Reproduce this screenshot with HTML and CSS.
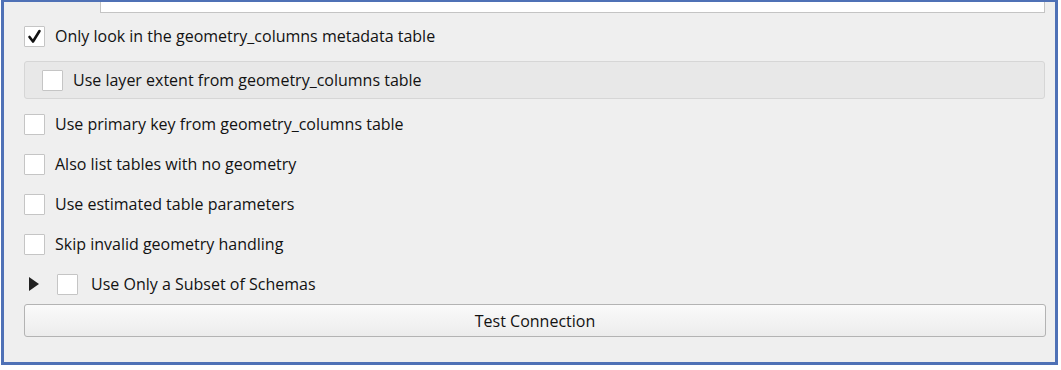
FILE: index.html
```html
<!DOCTYPE html>
<html>
<head>
<meta charset="utf-8">
<link rel="stylesheet" href="styles.css">
</head>
<body>
<div class="frame">
  <div class="stub-row"><div class="stub"></div></div>
  <div class="row row1">
    <span class="box checked"><svg width="15" height="15" viewBox="0 0 15 15"><path d="M2.5 8 L6 12.5 L12.5 2" fill="none" stroke="#111" stroke-width="2.6" stroke-linecap="round" stroke-linejoin="round"/></svg></span>
    <span class="label">Only look in the geometry_columns metadata table</span>
  </div>
  <div class="group">
    <span class="box"></span>
    <span class="label">Use layer extent from geometry_columns table</span>
  </div>
  <div class="row row3">
    <span class="box"></span>
    <span class="label">Use primary key from geometry_columns table</span>
  </div>
  <div class="row">
    <span class="box"></span>
    <span class="label">Also list tables with no geometry</span>
  </div>
  <div class="row">
    <span class="box"></span>
    <span class="label">Use estimated table parameters</span>
  </div>
  <div class="row">
    <span class="box"></span>
    <span class="label">Skip invalid geometry handling</span>
  </div>
  <div class="row row7">
    <span class="arrow"></span>
    <span class="box"></span>
    <span class="label">Use Only a Subset of Schemas</span>
  </div>
  <div class="button">Test Connection</div>
</div>
</body>
</html>
```
FILE: styles.css
```css
html, body {
  margin: 0;
  padding: 0;
  background: #ffffff;
}
.frame {
  margin-left: 1px;
  height: 360px;
  border: 3px solid #4f71b6;
  border-top-width: 2px;
  background: #efefef;
  display: flex;
  flex-direction: column;
  padding-left: 20px;
  padding-right: 10px;
  box-sizing: content-box;
  width: 1021px;
  font-family: "Open Sans", "DejaVu Sans", sans-serif;
  font-size: 16px;
  color: #121212;
}
.stub-row {
  height: 11px;
  flex: none;
}
.stub {
  margin-left: 76px;
  height: 10px;
  background: #ffffff;
  border: 1px solid #c4c4c4;
  border-top: none;
  width: 943px;
}
.row {
  height: 40px;
  flex: none;
  display: flex;
  align-items: center;
}
.row1 {
  height: 46px;
}
.row3 {
  margin-top: 5px;
}
.box {
  width: 19px;
  height: 19px;
  border: 1px solid #c5c5c5;
  background: #ffffff;
  flex: none;
  display: flex;
  align-items: center;
  justify-content: center;
  border-radius: 1px;
}
.label {
  margin-left: 10px;
}
.group {
  margin-top: 2px;
  height: 36px;
  flex: none;
  border: 1px solid #d6d6d6;
  border-radius: 3px;
  background: #e8e8e8;
  display: flex;
  align-items: center;
  padding-left: 17px;
  box-sizing: content-box;
  width: 1002px;
}
.arrow {
  width: 0;
  height: 0;
  margin-left: 5px;
  border-top: 7.5px solid transparent;
  border-bottom: 7.5px solid transparent;
  border-left: 10px solid #222222;
  margin-right: 18px;
}
.row7 .label {
  margin-left: 13px;
}
.button {
  flex: none;
  height: 31px;
  width: 1020px;
  border: 1px solid #b3b3b3;
  border-radius: 3px;
  background: linear-gradient(#fafafa, #ececec);
  display: flex;
  align-items: center;
  justify-content: center;
}
```
